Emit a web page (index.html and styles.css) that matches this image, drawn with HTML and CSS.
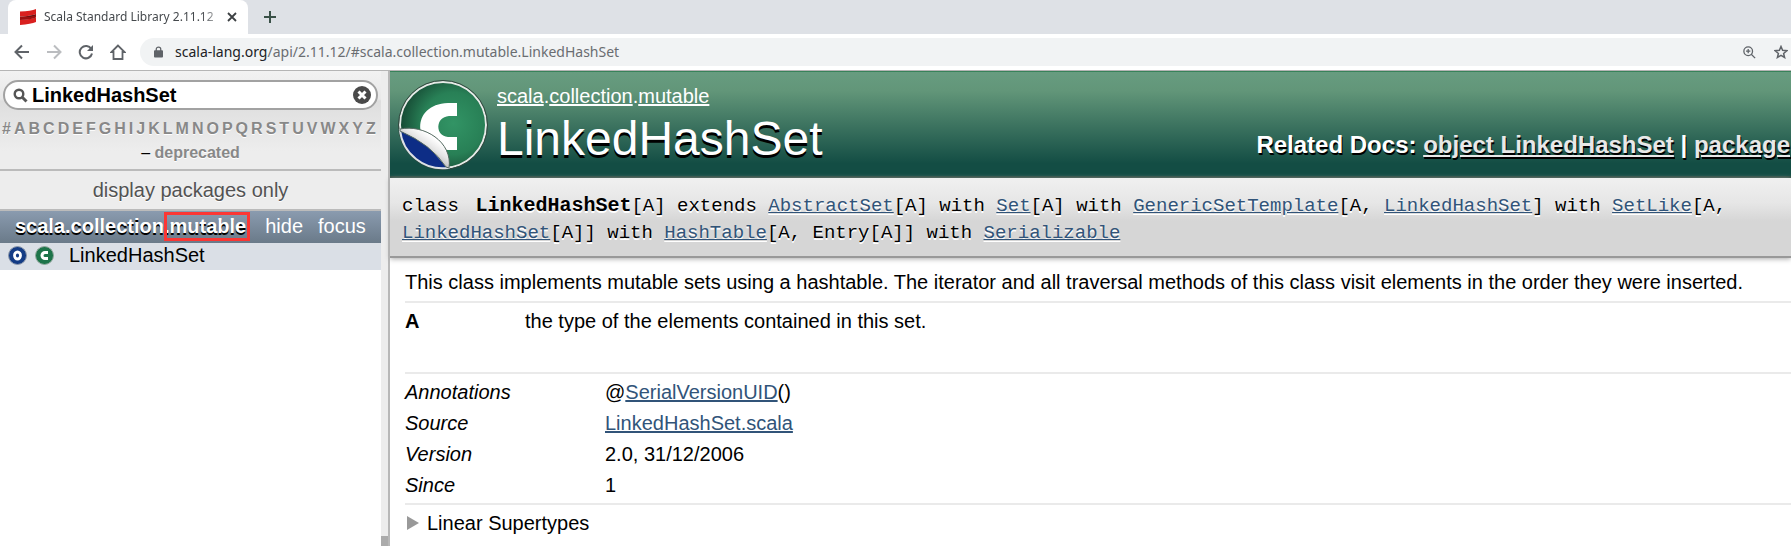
FILE: index.html
```html
<!DOCTYPE html>
<html lang="en">
<head>
<meta charset="utf-8">
<title>Scala Standard Library 2.11.12</title>
<link rel="stylesheet" href="styles.css">
</head>
<body>
<div class="tabs">
  <div class="tab">
    <svg class="favicon" width="16" height="16" viewBox="0 0 16 16"><path fill="#d9201f" d="M0 2.500Q11 2 16 0V5Q11 7 0 7.500ZM0 11Q11 10 16 8.500V13Q11 15 0 16Z"/><path fill="#9b1010" d="M0 7.500Q11 7 16 5V8.500Q11 10.500 0 11Z"/><path fill="#3b1313" d="M3 7.500Q12 7 16 5.500Q14 8 3 7.500Z"/></svg>
    <span class="tab-title">Scala Standard Library 2.11.12</span>
    <button class="plain" aria-label="Close tab"><svg width="10" height="10" viewBox="0 0 10 10"><path d="M1 1L9 9M9 1L1 9" stroke="#3c4043" stroke-width="1.800"/></svg></button>
  </div>
  <button class="plain new-tab" aria-label="New tab"><svg width="12" height="12" viewBox="0 0 12 12"><path d="M6 0V12M0 6H12" stroke="#3a5148" stroke-width="2"/></svg></button>
</div>
<div class="toolbar">
  <button class="plain" aria-label="Back"><svg width="16" height="16" viewBox="0 0 16 16" fill="none" stroke="#5f6368" stroke-width="2"><path d="M15 8H2M8 1.500L1.500 8L8 14.500"/></svg></button>
  <button class="plain" aria-label="Forward"><svg width="16" height="16" viewBox="0 0 16 16" fill="none" stroke="#bbbdc0" stroke-width="2"><path d="M1 8H14M8 1.500L14.500 8L8 14.500"/></svg></button>
  <button class="plain" aria-label="Reload"><svg width="16" height="16" viewBox="0 0 16 16"><path d="M13.300 5A6.200 6.200 0 1 0 14 9.500" fill="none" stroke="#5f6368" stroke-width="2"/><path d="M15 1V7H9Z" fill="#5f6368"/></svg></button>
  <button class="plain" aria-label="Home"><svg width="16" height="16" viewBox="0 0 16 16" fill="none" stroke="#5f6368" stroke-width="1.800"><path d="M8 1.500L1.500 8H3.500V15H12.500V8H14.500Z"/></svg></button>
  <div class="omnibox">
    <svg width="9" height="12" viewBox="0 0 10 12"><path fill="#5f6368" d="M1 4H9Q10 4 10 5V11Q10 12 9 12H1Q0 12 0 11V5Q0 4 1 4Z"/><path d="M2.500 5V3A2.500 2.300 0 0 1 7.500 3V5" fill="none" stroke="#5f6368" stroke-width="1.400"/></svg>
    <span class="url"><span class="host">scala-lang.org</span>/api/2.11.12/#scala.collection.mutable.LinkedHashSet</span>
    <button class="plain" aria-label="Zoom"><svg width="13" height="13" viewBox="0 0 15 15" fill="none" stroke="#5f6368" stroke-width="1.500"><circle cx="6" cy="6" r="5"/><path d="M9.500 9.500L14 14M6 3.500V8.500M3.500 6H8.500"/></svg></button>
    <button class="plain" aria-label="Bookmark"><svg width="14" height="14" viewBox="0 0 14 14"><path d="M7 1.500L8.600 5.300L12.800 5.700L9.600 8.400L10.600 12.500L7 10.300L3.400 12.500L4.400 8.400L1.200 5.700L5.400 5.300Z" fill="none" stroke="#5f6368" stroke-width="1.500"/></svg></button>
  </div>
</div>
<div class="frames">
  <nav class="sidebar">
    <div class="filter">
      <div class="search">
        <svg width="15" height="15" viewBox="0 0 15 15" fill="none" stroke="#555"><circle cx="6" cy="6" r="4.300" stroke-width="2.400"/><path d="M9.500 9.500L13.500 13.500" stroke-width="3"/></svg>
        <input type="text" value="LinkedHashSet" aria-label="Search" spellcheck="false">
        <button class="plain" aria-label="Clear"><svg width="18" height="18" viewBox="0 0 18 18"><circle cx="9" cy="9" r="9" fill="#4a4a4a"/><path d="M5.500 5.500L12.500 12.500M12.500 5.500L5.500 12.500" stroke="#fff" stroke-width="3"/></svg></button>
      </div>
      <div class="letters"><a href="#">#</a><a href="#">A</a><a href="#">B</a><a href="#">C</a><a href="#">D</a><a href="#">E</a><a href="#">F</a><a href="#">G</a><a href="#">H</a><a href="#">I</a><a href="#">J</a><a href="#">K</a><a href="#">L</a><a href="#">M</a><a href="#">N</a><a href="#">O</a><a href="#">P</a><a href="#">Q</a><a href="#">R</a><a href="#">S</a><a href="#">T</a><a href="#">U</a><a href="#">V</a><a href="#">W</a><a href="#">X</a><a href="#">Y</a><a href="#">Z</a></div>
      <div class="deprecated">– <a href="#">deprecated</a></div>
    </div>
    <button class="kind">display packages only</button>
    <div class="package">
      <a class="package-name" href="#">scala.collection<span class="marked">.mutable</span></a>
      <a href="#">hide</a>
      <a href="#">focus</a>
    </div>
    <div class="entry">
      <svg width="19" height="19" viewBox="0 0 19 19"><circle cx="9.500" cy="9.500" r="9" fill="#143c85" stroke="#8c98ab"/><ellipse cx="9.500" cy="9.500" rx="3" ry="3.500" fill="#143c85" stroke="#fff" stroke-width="2.800"/></svg>
      <svg width="19" height="19" viewBox="0 0 19 19"><circle cx="9.500" cy="9.500" r="9" fill="#1d744a" stroke="#91a79d"/><path d="M13 6.500H10A3 3 0 0 0 10 12.500H13" fill="none" stroke="#fff" stroke-width="3"/></svg>
      <a href="#">LinkedHashSet</a>
    </div>
  </nav>
  <div class="scroll"><div class="thumb"></div></div>
  <main class="content">
    <header class="definition">
      <svg class="badge" width="90" height="90" viewBox="0 0 90 90">
        <defs>
          <radialGradient id="green" cx=".62" cy=".48" r=".6"><stop offset="0" stop-color="#329465"/><stop offset=".6" stop-color="#288056"/><stop offset="1" stop-color="#174d36"/></radialGradient>
          <linearGradient id="peel" x1=".7" y1=".25" x2=".4" y2=".6"><stop offset="0" stop-color="#fff"/><stop offset=".5" stop-color="#e4e4e4"/><stop offset="1" stop-color="#b4b4b4"/></linearGradient>
        </defs>
        <circle cx="45" cy="45" r="43" fill="url(#green)" stroke="#e6eae7" stroke-width="2"/>
        <circle cx="45" cy="45" r="44.500" fill="none" stroke="#33483f"/>
        <path d="M59 23V36H51C37 37 37 56 50 57H59V70H50C14 70 12 24 50 23Z" fill="#fff"/>
        <path d="M2 50Q20 50 50 88A43 43 0 0 1 2 50Z" fill="#0d2d86" stroke="#dce1e5" stroke-width="2"/>
        <path d="M2 49C26 44 55 62 51 88L48 87Q34 65 2 51Z" fill="url(#peel)" stroke="#53685f"/>
      </svg>
      <div class="heading">
        <p class="owner"><a href="#">scala</a>.<a href="#">collection</a>.<a href="#">mutable</a></p>
        <h1>LinkedHashSet</h1>
      </div>
      <p class="related">Related Docs: <a href="#">object LinkedHashSet</a> | <a href="#">package</a></p>
    </header>
    <div class="signature">class <b>LinkedHashSet</b>[A] extends <a href="#">AbstractSet</a>[A] with <a href="#">Set</a>[A] with <a href="#">GenericSetTemplate</a>[A, <a href="#">LinkedHashSet</a>] with <a href="#">SetLike</a>[A, <a href="#">LinkedHashSet</a>[A]] with <a href="#">HashTable</a>[A, Entry[A]] with <a href="#">Serializable</a></div>
    <div class="comment">
      <p class="intro">This class implements mutable sets using a hashtable. The iterator and all traversal methods of this class visit elements in the order they were inserted.</p>
      <dl class="params"><dt>A</dt><dd>the type of the elements contained in this set.</dd></dl>
      <dl class="attributes">
        <dt>Annotations</dt><dd>@<a href="#">SerialVersionUID</a>()</dd>
        <dt>Source</dt><dd><a href="#">LinkedHashSet.scala</a></dd>
        <dt>Version</dt><dd>2.0, 31/12/2006</dd>
        <dt>Since</dt><dd>1</dd>
      </dl>
      <button class="toggle"><svg width="12" height="14" viewBox="0 0 12 14"><path d="M0 0L12 7L0 14Z" fill="#999"/></svg>Linear Supertypes</button>
    </div>
  </main>
</div>
</body>
</html>
```
FILE: styles.css
```css
* { box-sizing: border-box; }
body {
  margin: 0;
  height: 100vh;
  display: flex;
  flex-direction: column;
  overflow: hidden;
  background: #fff;
  color: #000;
  font: 20px/24px "Liberation Sans", Arial, sans-serif;
}
p, h1, dl, dd { margin: 0; }
svg { flex: none; display: block; }
button { font: inherit; color: inherit; cursor: pointer; }
.plain { padding: 0; border: 0; background: none; flex: none; }

.tabs {
  display: flex;
  align-items: flex-end;
  height: 34px;
  padding-left: 8px;
  background: #dee1e6;
  flex: none;
}
.tab {
  display: flex;
  align-items: center;
  width: 240px;
  height: 34px;
  padding: 0 11px 0 12px;
  border-radius: 8px 8px 0 0;
  background: #fff;
  color: #45494d;
  font: 12px/20px "Noto Sans", "Open Sans", sans-serif;
}
.tab-title {
  flex: 1;
  margin: 0 8px;
  white-space: nowrap;
  -webkit-mask-image: linear-gradient(to right, #000 90%, rgba(0, 0, 0, .3));
  mask-image: linear-gradient(to right, #000 90%, rgba(0, 0, 0, .3));
}
.new-tab { margin: 0 0 11px 16px; }

.toolbar {
  display: flex;
  align-items: center;
  gap: 16px;
  height: 37px;
  padding-left: 14px;
  border-bottom: 1px solid #b5b5b5;
  background: #fff;
  flex: none;
}
.omnibox {
  flex: 1;
  display: flex;
  align-items: center;
  gap: 12px;
  height: 28px;
  margin-left: -2px;
  padding: 0 3px 0 14px;
  border-radius: 14px 0 0 14px;
  background: #f1f3f4;
}
.omnibox button + button { margin-left: 6px; }
.url {
  flex: 1;
  color: #6a6d71;
  font: 14px/20px "Noto Sans", "Open Sans", sans-serif;
}
.host { color: #202124; }

.frames { flex: 1; min-height: 0; display: flex; }
.sidebar { width: 381px; flex: none; background: #fff; }
.filter {
  padding: 9px 2px 5px;
  border-bottom: 2px solid #bbb;
  background: linear-gradient(#f2f2f2 0, #e8e8e8 28px, #dedede 30px, #ededed 80px);
}
.search {
  display: flex;
  align-items: center;
  gap: 4px;
  height: 30px;
  margin: 0 1px;
  padding: 0 5px 0 8px;
  border: 2px solid #a2a2a2;
  border-radius: 15px;
  background: #fff;
}
.search input {
  flex: 1;
  min-width: 0;
  height: 24px;
  padding: 0;
  border: 0;
  outline: 0;
  background: none;
  font: bold 20px/24px "Liberation Sans", Arial, sans-serif;
}
.letters, .deprecated {
  font-size: 16px;
  text-shadow: #fff 0 1px 0;
}
.letters {
  display: flex;
  justify-content: space-between;
  margin-top: 7px;
  padding-right: 3px;
  font-weight: bold;
}
.filter a { color: #888; font-weight: bold; text-decoration: none; }
.deprecated { line-height: 23px; text-align: center; }
.kind {
  display: block;
  width: 100%;
  padding: 7px 0;
  border: 0;
  border-bottom: 2px solid #bbb;
  background: #ededed;
  color: #535353;
  text-shadow: #fff 0 1px 0;
}
.package {
  display: flex;
  gap: 15px;
  align-items: center;
  height: 32px;
  padding: 0 0 2px 15px;
  background: linear-gradient(#8a9baf, #6a7a89);
}
.package a { color: #fff; text-decoration: none; }
.package .package-name { margin-right: 4px; font-weight: bold; text-shadow: #000 0 2px 0; }
.marked { position: relative; }
.marked::after {
  content: "";
  position: absolute;
  inset: -3px -4px -4px 0;
  border: 3px solid #fb3734;
}
.entry {
  display: flex;
  align-items: center;
  gap: 8px;
  height: 27px;
  padding: 0 8px 3px;
  background: #dadfe6;
}
.entry a { margin-left: 7px; color: #000; text-decoration: none; }

.scroll {
  display: flex;
  flex-direction: column;
  justify-content: flex-end;
  width: 9px;
  border-right: 2px solid #b8b8b8;
  background: #ededed;
  flex: none;
}
.thumb { height: 10px; background: #ababab; }

.content { flex: 1; min-width: 0; }
.definition {
  display: flex;
  height: 107px;
  padding: 8px 1px 0 8px;
  border-top: 1px solid #38825a;
  border-bottom: 2px solid #2a4b40;
  background: linear-gradient(#679c80, #629679 18%, #134d44 88%);
  color: #fff;
}
.heading { flex: 1; padding: 4px 0 0 9px; }
.owner a { color: #fff; }
.heading h1 {
  font-size: 48px;
  line-height: 62px;
  font-weight: normal;
  text-shadow: #000 0 3px 0;
}
.related {
  padding-top: 51px;
  font-size: 24px;
  line-height: 28px;
  font-weight: bold;
  white-space: nowrap;
  text-shadow: #000 1px 2px 0;
}
.related a { color: #e8e8e8; }
.signature {
  padding: 14px 48px 9px 12px;
  border-bottom: 2px solid #999;
  background: linear-gradient(#f0f0f0, #e6e6e6 32%, #d6d6d6 55%, #d6d6d6);
  box-shadow: 0 1px 5px #aaa;
  font: 19px/27px "Liberation Mono", "Courier New", monospace;
  text-shadow: #fff 0 2px 0;
}
.signature b { margin-left: 5px; font-size: 20px; }
.signature a, .comment a { color: #315479; }
.comment { padding: 12px 0 0 15px; }
.intro { padding-bottom: 7px; }
.params {
  display: grid;
  grid-template-columns: 120px 1fr;
  padding: 6px 0 39px;
  border-top: 2px solid #eaeaea;
}
.params dt { font-weight: bold; }
.attributes {
  display: grid;
  grid-template-columns: 200px 1fr;
  row-gap: 7px;
  padding: 6px 0;
  border-top: 2px solid #eaeaea;
  border-bottom: 2px solid #eaeaea;
}
.attributes dt { font-style: italic; }
.toggle {
  display: flex;
  align-items: center;
  gap: 8px;
  padding: 6px 2px;
  border: 0;
  background: none;
}
```
